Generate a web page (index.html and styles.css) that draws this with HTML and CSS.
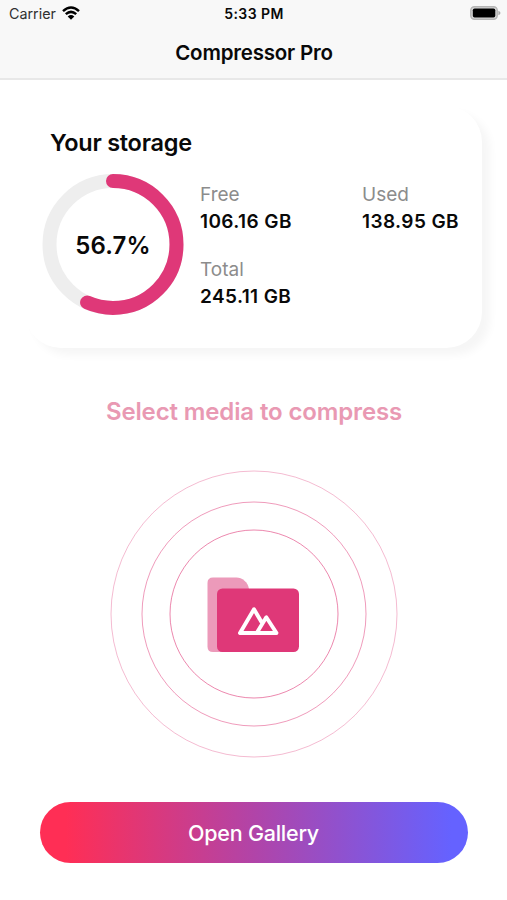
FILE: index.html
```html
<!DOCTYPE html>
<html lang="en">
<head>
<meta charset="utf-8">
<title>Compressor Pro</title>
<link rel="stylesheet" href="styles.css">
</head>
<body>
<header class="header">
  <div class="status">
    <div class="carrier"><span>Carrier</span>
      <svg width="18" height="14" viewBox="0 0 18 14" fill="none" stroke="#000" stroke-width="2.5"><path d="M1 5.1Q9-2 17 5.1M3.8 8.1Q9 3.6 14.2 8.1"/><path d="M9 13.7 5.7 10.4Q9 7.6 12.3 10.4Z" fill="#000" stroke="none"/></svg>
    </div>
    <time class="time">5:33 PM</time>
    <svg class="battery" width="31" height="14" viewBox="0 0 31 14"><rect x=".8" y=".8" width="26.4" height="12.4" rx="3.6" fill="#d8d8d8" stroke="#b5b5b5" stroke-width="1.5"/><rect x="2.8" y="2.5" width="22.5" height="9" rx="1.8"/><path d="M28.4 4.8Q30.5 5.5 30.5 7T28.4 9.2Z" fill="#aaa"/></svg>
  </div>
  <h1 class="title">Compressor Pro</h1>
</header>
<main class="main">
  <section class="card">
    <h2 class="card-title">Your storage</h2>
    <div class="card-body">
      <div class="ring">
        <svg width="142" height="142" viewBox="0 0 142 142" fill="none" stroke-width="14"><circle cx="71" cy="70.500" r="63.5" stroke="#eee"/><circle cx="71" cy="70.500" r="63.5" stroke="#df3878" stroke-linecap="round" pathLength="100" stroke-dasharray="56.7 100" transform="rotate(-90 71 70.500)"/></svg>
        <strong class="percent">56.7%</strong>
      </div>
      <dl class="stats">
        <div><dt>Free</dt><dd>106.16 GB</dd></div>
        <div><dt>Used</dt><dd>138.95 GB</dd></div>
        <div><dt>Total</dt><dd>245.11 GB</dd></div>
      </dl>
    </div>
  </section>
  <h2 class="prompt">Select media to compress</h2>
  <svg class="media" width="290" height="290" viewBox="0 0 290 290" fill="none">
    <g stroke="#df3878"><circle cx="145" cy="145" r="143" opacity=".34"/><circle cx="145" cy="145" r="112" opacity=".5"/><circle cx="145" cy="145" r="84" opacity=".6"/></g>
    <path d="M104 108.500H127.500C133 108.500 139 113 140 120V183H104Q98.500 183 98.500 177.500V114Q98.500 108.500 104 108.500Z" fill="#ec9aba"/>
    <rect x="108" y="119.500" width="82" height="63.500" rx="5.500" fill="#df3878"/>
    <path d="M152.500 153 145 140.300 131 164H167.500L157.300 148.300 148 163.500" stroke="#fff" stroke-width="3.900" stroke-linejoin="round" stroke-linecap="round"/>
  </svg>
  <button class="gallery">Open Gallery</button>
</main>
</body>
</html>
```
FILE: styles.css
```css
* { box-sizing: border-box; }
body { margin: 0; height: 900px; overflow: hidden; background: #fff; color: #090909; font-family: Inter, sans-serif; }
h1, h2, dl, dd { margin: 0; font-weight: 600; }
.header { height: 80px; background: #f8f8f8; border-bottom: 2px solid #e8e8e8; }
.status { height: 28px; padding: 0 6px 0 9px; display: grid; grid-template-columns: 1fr auto 1fr; align-items: center; }
.carrier { display: flex; align-items: center; gap: 6px; font-size: 14.3px; line-height: 28px; color: #303030; }
.carrier svg { margin-top: -3px; }
.time { font-size: 14px; font-weight: 600; line-height: 28px; letter-spacing: .45px; margin-left: -2px; }
.battery { justify-self: end; margin-top: -2px; }
.title { font-size: 20.5px; line-height: 49px; text-align: center; letter-spacing: -.2px; padding-left: 1px; }
.main { display: flex; flex-direction: column; align-items: center; padding-top: 26px; }
.card { width: 457px; height: 242px; border-radius: 36px; padding: 22px 17px 0; background: #fff; box-shadow: 8px 7px 8px #f6f6f6; }
.card-title { font-size: 23.5px; line-height: 30px; padding-left: 8px; letter-spacing: -.25px; }
.card-body { display: flex; gap: 16px; margin-top: 16px; }
.ring { display: grid; place-items: center; width: 142px; height: 142px; }
.ring > * { grid-area: 1 / 1; }
.percent { font-size: 24px; font-weight: 600; letter-spacing: .1px; }
.stats { display: grid; grid-template-columns: 162px auto; grid-auto-rows: 75px; padding-top: 7px; font-size: 19px; line-height: 27px; white-space: nowrap; }
dt { color: #8c8c8c; font-weight: 400; }
dd { letter-spacing: .4px; }
.prompt { margin-top: 49px; font-size: 24px; line-height: 30px; color: #e999b3; letter-spacing: -.13px; padding-left: 1px; }
.media { margin-top: 42px; }
.gallery { width: 428px; height: 61px; margin-top: 43px; padding: 0; border: 0; border-radius: 31px; background: linear-gradient(90deg, #ff2e55 6%, #b144a8 50%, #6562ff 96%); color: #fff; font: 500 21.5px/63px Inter, sans-serif; letter-spacing: -.25px; }
```
